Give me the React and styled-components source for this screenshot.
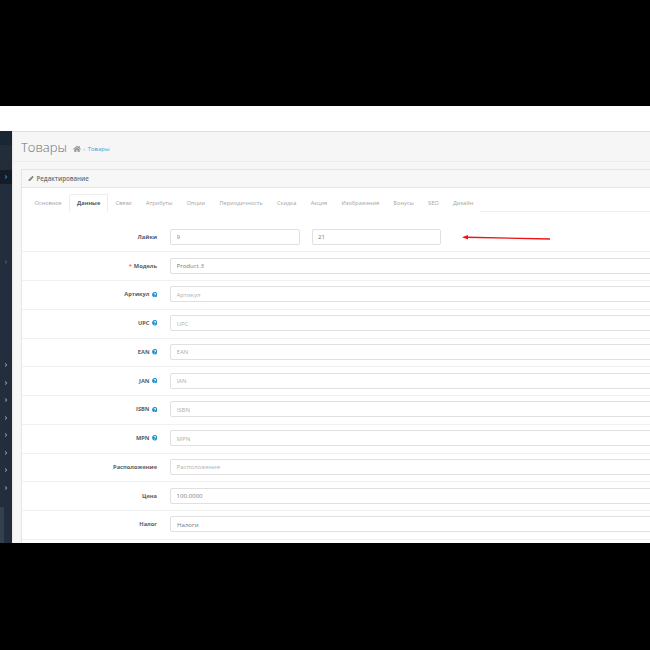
import React from 'react';
import styled, { createGlobalStyle } from 'styled-components';
import { FaHome, FaPencilAlt, FaQuestionCircle, FaAngleRight } from 'react-icons/fa';

const GlobalStyle = createGlobalStyle`
  html, body { margin: 0; padding: 0; background: #000; }
  * { box-sizing: border-box; }
`;

const Page = styled.div`
  width: 650px;
  height: 650px;
  overflow: hidden;
  display: flex;
  flex-direction: column;
  font-family: "Open Sans", "Liberation Sans", sans-serif;
`;

const BlackBar = styled.div`
  height: ${(p) => p.$h}px;
  flex: none;
  background: #000;
`;

const TopHeader = styled.div`
  height: 25px;
  flex: none;
  background: #fff;
`;

const Main = styled.div`
  flex: 1;
  display: flex;
  min-height: 0;
  overflow: hidden;
`;

const Sidebar = styled.div`
  width: 12px;
  flex: none;
  display: flex;
  flex-direction: column;
  background: #232d3c;
`;

const SideItem = styled.div`
  height: ${(p) => p.$h}px;
  flex: none;
  display: flex;
  align-items: center;
  justify-content: center;
  background: ${(p) => p.$bg || 'transparent'};
  color: ${(p) => p.$color || '#8f99a3'};
  font-size: 6px;
`;

const SideFooter = styled.div`
  flex: 1;
  margin-top: 11px;
  width: 4px;
  background: #33414f;
`;

const Content = styled.div`
  flex: 1;
  min-width: 0;
  background: #f6f6f6;
  border-left: 1px solid #e8e8e8;
  border-top: 1px solid #dedede;
`;

const PageHeader = styled.div`
  height: 30px;
  display: flex;
  align-items: center;
  padding: 1px 0 0 8px;
  border-bottom: 1px solid #ededed;
`;

const Title = styled.h1`
  margin: 0;
  font-size: 13px;
  font-weight: 300;
  color: #6f6f6f;
`;

const Crumbs = styled.div`
  margin: 3px 0 0 6px;
  display: flex;
  align-items: center;
  gap: 2.5px;
  font-size: 6px;
  color: #999;
`;

const CrumbLink = styled.span`
  color: #4c9bd0;
`;

const Panel = styled.div`
  width: 690px;
  margin: 7px 0 0 8px;
  border: 1px solid #e6e6e6;
  border-right: none;
  background: #fff;
`;

const PanelHeading = styled.div`
  height: 18px;
  display: flex;
  align-items: center;
  gap: 3px;
  padding-left: 6px;
  font-size: 6.2px;
  font-weight: 600;
  color: #707070;
  background: #f7f7f7;
  border-bottom: 1px solid #e6e6e6;
`;

const PanelBody = styled.div`
  padding: 6px 0 24px;
`;

const Tabs = styled.div`
  display: flex;
  height: 18px;
  margin: 0 0 11.5px 5.3px;
  border-bottom: 1px solid #ededed;
`;

const Tab = styled.div`
  height: 18px;
  padding: 0 7.2px;
  display: flex;
  align-items: center;
  font-size: 5.6px;
  white-space: nowrap;
  color: ${(p) => (p.$active ? '#555' : '#a3a3a3')};
  font-weight: ${(p) => (p.$active ? 700 : 400)};
  background: #fff;
  ${(p) => p.$active && `
    border: 1px solid #ededed;
    border-bottom-color: #fff;
    border-radius: 2px 2px 0 0;
  `}
`;

const Row = styled.div`
  height: 28.75px;
  flex: none;
  display: flex;
  align-items: center;
  padding-bottom: 1px;
  border-bottom: 1px solid #f0f0f0;
`;

const LabelCell = styled.label`
  width: 135px;
  flex: none;
  display: flex;
  justify-content: flex-end;
  align-items: center;
  gap: 2px;
  font-size: 5.7px;
  font-weight: 700;
  color: #5c5c5c;
  white-space: nowrap;
`;

const Req = styled.span`
  color: #f56b6b;
`;

const Help = styled(FaQuestionCircle)`
  color: #1e91cf;
  font-size: 5.5px;
`;

const Field = styled.input`
  flex: ${(p) => (p.$half ? 'none' : '1')};
  width: ${(p) => (p.$half ? '129.5px' : 'auto')};
  min-width: 0;
  height: 16px;
  margin-left: ${(p) => (p.$second ? 12 : 0)}px;
  padding: 0 5.5px;
  border: 1px solid #e0e0e0;
  border-radius: 2px;
  background: #fff;
  font-family: inherit;
  font-size: 6.1px;
  color: #777;
  outline: none;
  &::placeholder { color: #b0b0b0; opacity: 1; }
`;

const SelectField = styled.select`
  flex: 1;
  min-width: 0;
  height: 16px;
  padding: 0 6px;
  border: 1px solid #e0e0e0;
  border-radius: 2px;
  background: #fff;
  appearance: none;
  font-family: inherit;
  font-size: 6.1px;
  color: #777;
  outline: none;
`;

const FormArea = styled.div`
  display: flex;
  flex: 1;
  margin-left: 13px;
  min-width: 0;
`;

const Arrow = styled.svg`
  width: 89px;
  height: 8px;
  flex: none;
  margin: 5px 0 0 20.5px;
`;

const sideItems = [
  { h: 14, bg: '#1b2634' },
  { h: 25, bg: '#232c39' },
  { h: 14, bg: '#141c27', color: '#2b8fd0', icon: true },
  { h: 22, bg: '#222d3d' },
  { h: 49 },
  { h: 14, color: '#4d5a69', icon: true },
  { h: 87.25, bg: '#232d3e' },
  { h: 17.5, icon: true },
  { h: 17.5, icon: true },
  { h: 17.5, icon: true },
  { h: 17.5, icon: true },
  { h: 17.5, icon: true },
  { h: 17.5, icon: true },
  { h: 17.5, icon: true },
  { h: 17.5, icon: true },
];

const tabs = ['Основное', 'Данные', 'Связи', 'Атрибуты', 'Опции', 'Периодичность', 'Скидка', 'Акция', 'Изображения', 'Бонусы', 'SEO', 'Дизайн'];

const rows = [
  { label: 'Модель', required: true, value: 'Product 3' },
  { label: 'Артикул', help: true, placeholder: 'Артикул' },
  { label: 'UPC', help: true, placeholder: 'UPC' },
  { label: 'EAN', help: true, placeholder: 'EAN' },
  { label: 'JAN', help: true, placeholder: 'JAN' },
  { label: 'ISBN', help: true, placeholder: 'ISBN' },
  { label: 'MPN', help: true, placeholder: 'MPN' },
  { label: 'Расположение', placeholder: 'Расположение' },
  { label: 'Цена', value: '100.0000' },
];

const App = () => {
  return (
    <Page>
      <GlobalStyle />
      <BlackBar $h={106} />
      <TopHeader />
      <Main>
        <Sidebar>
          {sideItems.map((item, i) => (
            <SideItem key={i} $h={item.h} $bg={item.bg} $color={item.color}>
              {item.icon && <FaAngleRight />}
            </SideItem>
          ))}
          <SideFooter />
        </Sidebar>
        <Content>
          <PageHeader>
            <Title>Товары</Title>
            <Crumbs>
              <FaHome size={8} />
              <span>›</span>
              <CrumbLink>Товары</CrumbLink>
            </Crumbs>
          </PageHeader>
          <Panel>
            <PanelHeading>
              <FaPencilAlt size={5.5} />
              Редактирование
            </PanelHeading>
            <PanelBody>
              <Tabs>
                {tabs.map((t) => (
                  <Tab key={t} $active={t === 'Данные'}>{t}</Tab>
                ))}
              </Tabs>
              <Row>
                <LabelCell>Лайки</LabelCell>
                <FormArea>
                  <Field $half defaultValue="9" />
                  <Field $half $second defaultValue="21" />
                  <Arrow viewBox="0 0 89 8">
                    <path d="M4 3.2 L88 5" stroke="#f01414" strokeWidth="1.4" fill="none" />
                    <path d="M0 3.2 L6 1 L6 5.4 Z" fill="#f01414" />
                  </Arrow>
                </FormArea>
              </Row>
              {rows.map((r) => (
                <Row key={r.label}>
                  <LabelCell>
                    {r.required && <Req>*</Req>}
                    {r.label}
                    {r.help && <Help />}
                  </LabelCell>
                  <FormArea>
                    <Field defaultValue={r.value} placeholder={r.placeholder} />
                  </FormArea>
                </Row>
              ))}
              <Row>
                <LabelCell>Налог</LabelCell>
                <FormArea>
                  <SelectField defaultValue="none">
                    <option value="none">Налоги</option>
                  </SelectField>
                </FormArea>
              </Row>
            </PanelBody>
          </Panel>
        </Content>
      </Main>
      <BlackBar $h={107} />
    </Page>
  );
};

export default App;
